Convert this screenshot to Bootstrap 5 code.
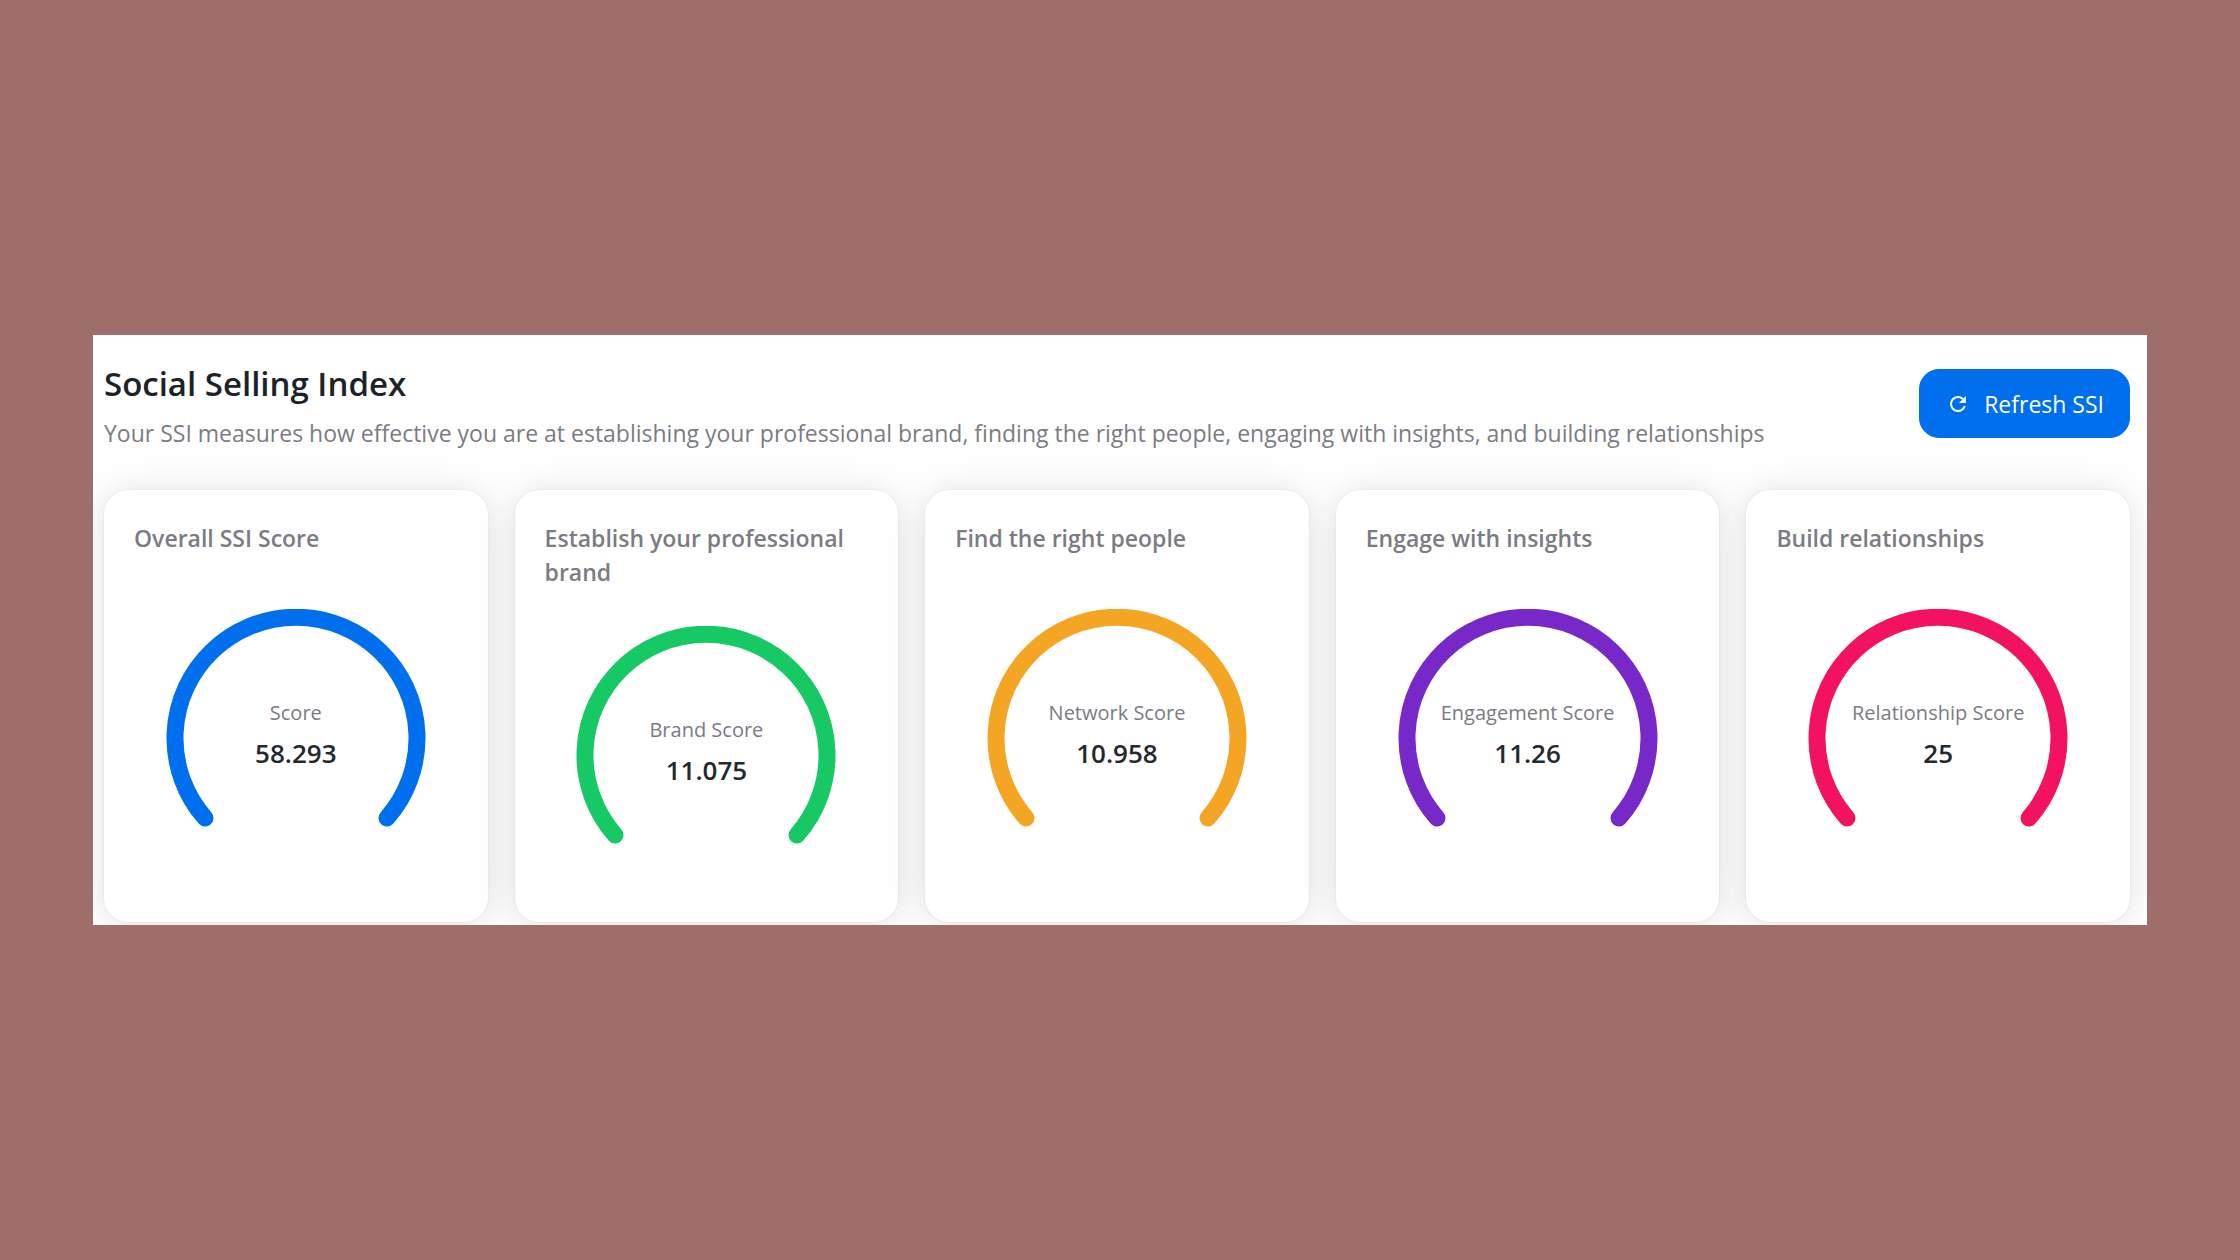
<!DOCTYPE html>
<html lang="en">
<head>
<meta charset="utf-8">
<meta name="viewport" content="width=device-width, initial-scale=1">
<title>Social Selling Index</title>
<link rel="stylesheet" href="https://cdn.jsdelivr.net/npm/bootstrap@5.3.0/dist/css/bootstrap.min.css">
<style>
  body { background: #9f6e6b; font-family: "Open Sans", "Noto Sans", sans-serif; color: #1c2328; }
  .ssi-panel { background: #fff; margin: 0 93px; padding: 25px 17px 3px 11px; overflow: hidden; }
  .ssi-title { font-size: 33px; line-height: 48px; font-weight: 600; margin: 0; }
  .ssi-desc { font-size: 23px; line-height: 34px; color: #7b7b83; margin: 8px 0 0; }
  .ssi-head { margin-bottom: 40px; }
  .ssi-refresh { --bs-btn-bg: #006fee; --bs-btn-border-color: #006fee; --bs-btn-color: #fff; --bs-btn-hover-bg: #1a7df0; --bs-btn-hover-color: #fff; --bs-btn-active-bg: #0062d4; --bs-btn-active-color: #fff;
    font-size: 23px; line-height: 34px; height: 69px; padding: 0 25px 0 26px; border-radius: 20px; gap: 14px; margin-top: 9px; }
  .ssi-grid { gap: 27px; }
  .score-card { flex: 1 1 0; min-width: 0; min-height: 432px; border: 0; border-radius: 24px; padding: 31px 30px 0;
    box-shadow: 0 0 22px rgba(0,0,0,.03), 0 3px 44px rgba(0,0,0,.1), 0 0 2px rgba(0,0,0,.1); }
  .score-name { font-size: 23px; line-height: 34px; font-weight: 600; color: #7b7b83; margin: 0; }
  .gauge { width: 260px; height: 260px; fill: none; stroke: currentColor; stroke-width: 17; stroke-linecap: round; }
  .gauge-text { padding-bottom: 11px; }
  .gauge-label { font-size: 20px; line-height: 40px; color: #7b7b83; }
  .gauge-value { font-size: 26px; line-height: 40px; font-weight: 600; color: #25292d; }
  .tone-blue { color: #006fee; } .tone-green { color: #17c964; } .tone-amber { color: #f5a524; }
  .tone-purple { color: #7828c8; } .tone-pink { color: #f31260; }
</style>
</head>
<body>
<svg width="0" height="0" class="position-absolute" aria-hidden="true">
  <symbol id="arc" viewBox="0 0 260 260"><path d="M39 209A121 121 0 1 1 221 209"/></symbol>
</svg>
<div class="min-vh-100 d-flex flex-column justify-content-center">
<main class="ssi-panel">
  <header class="ssi-head d-flex justify-content-between align-items-start">
    <div>
      <h1 class="ssi-title">Social Selling Index</h1>
      <p class="ssi-desc">Your SSI measures how effective you are at establishing your professional brand, finding the right people, engaging with insights, and building relationships</p>
    </div>
    <button type="button" class="btn ssi-refresh d-inline-flex align-items-center flex-shrink-0">
      <svg width="24" height="24" viewBox="0 0 24 24" fill="currentColor" aria-hidden="true"><path d="M17.65 6.35A7.96 7.96 0 0 0 12 4a8 8 0 1 0 7.73 10h-2.08A6 6 0 1 1 12 6c1.66 0 3.14.69 4.22 1.78L13 11h7V4z"/></svg>
      <span>Refresh SSI</span>
    </button>
  </header>
  <div class="ssi-grid d-flex">
    <section class="card score-card">
      <h2 class="score-name">Overall SSI Score</h2>
      <div class="flex-grow-1 d-flex align-items-center justify-content-center position-relative">
        <svg class="gauge tone-blue" aria-hidden="true"><use href="#arc"/></svg>
        <div class="gauge-text position-absolute text-center text-nowrap"><div class="gauge-label">Score</div><div class="gauge-value">58.293</div></div>
      </div>
    </section>
    <section class="card score-card">
      <h2 class="score-name">Establish your professional brand</h2>
      <div class="flex-grow-1 d-flex align-items-center justify-content-center position-relative">
        <svg class="gauge tone-green" aria-hidden="true"><use href="#arc"/></svg>
        <div class="gauge-text position-absolute text-center text-nowrap"><div class="gauge-label">Brand Score</div><div class="gauge-value">11.075</div></div>
      </div>
    </section>
    <section class="card score-card">
      <h2 class="score-name">Find the right people</h2>
      <div class="flex-grow-1 d-flex align-items-center justify-content-center position-relative">
        <svg class="gauge tone-amber" aria-hidden="true"><use href="#arc"/></svg>
        <div class="gauge-text position-absolute text-center text-nowrap"><div class="gauge-label">Network Score</div><div class="gauge-value">10.958</div></div>
      </div>
    </section>
    <section class="card score-card">
      <h2 class="score-name">Engage with insights</h2>
      <div class="flex-grow-1 d-flex align-items-center justify-content-center position-relative">
        <svg class="gauge tone-purple" aria-hidden="true"><use href="#arc"/></svg>
        <div class="gauge-text position-absolute text-center text-nowrap"><div class="gauge-label">Engagement Score</div><div class="gauge-value">11.26</div></div>
      </div>
    </section>
    <section class="card score-card">
      <h2 class="score-name">Build relationships</h2>
      <div class="flex-grow-1 d-flex align-items-center justify-content-center position-relative">
        <svg class="gauge tone-pink" aria-hidden="true"><use href="#arc"/></svg>
        <div class="gauge-text position-absolute text-center text-nowrap"><div class="gauge-label">Relationship Score</div><div class="gauge-value">25</div></div>
      </div>
    </section>
  </div>
</main>
</div>
<script src="https://cdn.jsdelivr.net/npm/bootstrap@5.3.0/dist/js/bootstrap.bundle.min.js"></script>
</body>
</html>
